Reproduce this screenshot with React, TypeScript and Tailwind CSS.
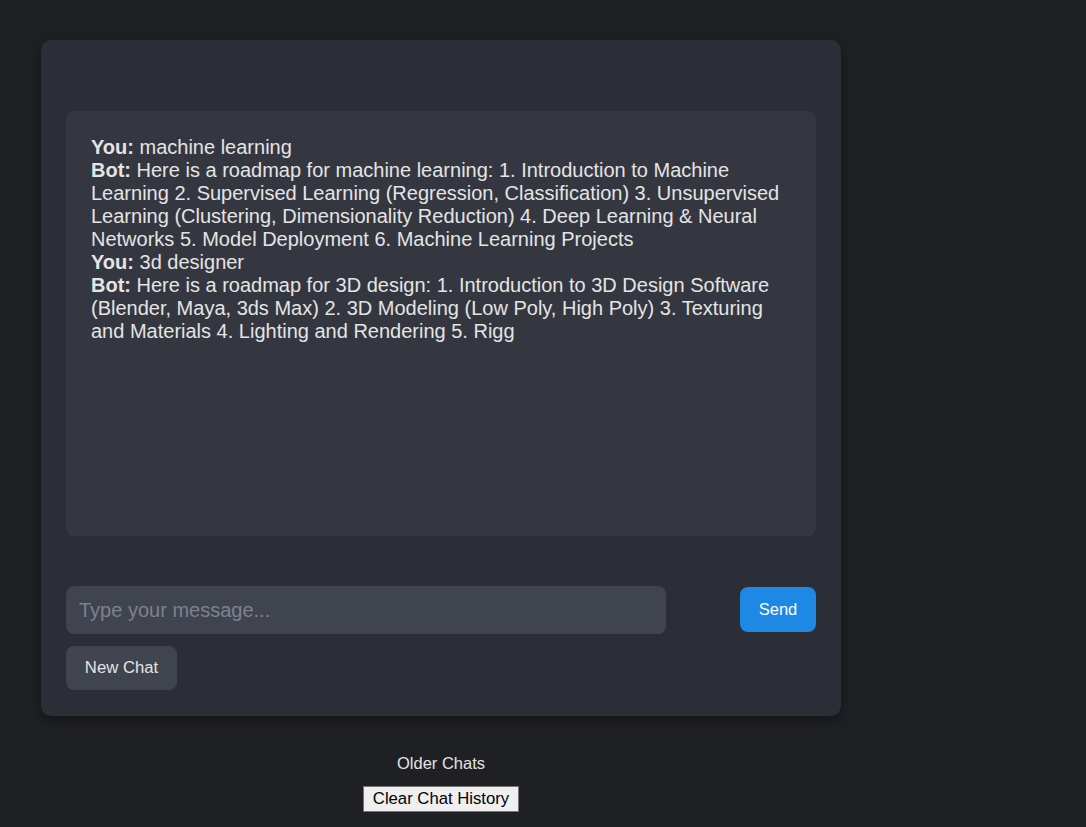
import React from "react";

export default function App() {
  return (
    <div className="min-h-screen w-full bg-[#1f2024] pt-[40px] pl-[41px] pb-[14px]" style={{ fontFamily: '"Liberation Sans", Arial, sans-serif' }}>
      <div className="w-[800px] rounded-[10px] bg-[#2b2e36] shadow-[0_4px_12px_rgba(0,0,0,0.35)] px-[25px] pt-[71px] pb-[26px]">
        <div className="h-[425px] rounded-[8px] bg-[#343740] p-[25px] text-[20px] leading-[23px] text-[#e4e4e4]">
          <div><b>You:</b> machine learning</div>
          <div><b>Bot:</b> Here is a roadmap for machine learning: 1. Introduction to Machine Learning 2. Supervised Learning (Regression, Classification) 3. Unsupervised Learning (Clustering, Dimensionality Reduction) 4. Deep Learning &amp; Neural Networks 5. Model Deployment 6. Machine Learning Projects</div>
          <div><b>You:</b> 3d designer</div>
          <div><b>Bot:</b> Here is a roadmap for 3D design: 1. Introduction to 3D Design Software (Blender, Maya, 3ds Max) 2. 3D Modeling (Low Poly, High Poly) 3. Texturing and Materials 4. Lighting and Rendering 5. Rigg</div>
        </div>
        <div className="mt-[50px] flex items-center justify-between">
          <input
            className="h-[48px] w-[600px] rounded-[8px] bg-[#40444f] px-[13px] text-[20px] text-[#e4e4e4] outline-none placeholder:text-[#7d828c]"
            placeholder="Type your message..."
          />
          <button className="mt-[-1px] h-[45px] w-[76px] rounded-[8px] bg-[#1e88e5] text-[16.5px] text-white">Send</button>
        </div>
        <button className="mt-[12px] h-[44px] w-[111px] rounded-[8px] bg-[#40444f] text-[16.7px] text-[#e4e4e4]">New Chat</button>
      </div>
      <div className="w-[800px] flex flex-col items-center">
        <div className="mt-[38px] text-[16.5px] leading-[18px] text-[#e4e4e4]">Older Chats</div>
        <button className="mt-[14px] h-[26px] w-[156px] border border-[#767676] bg-[#efefef] text-[16.7px] leading-[18px] text-black">Clear Chat History</button>
      </div>
    </div>
  );
}
